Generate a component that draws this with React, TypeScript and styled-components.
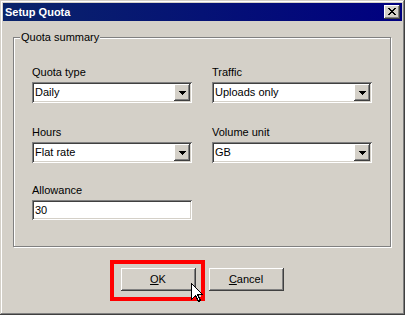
import React from "react";
import styled, { createGlobalStyle } from "styled-components";

const GlobalStyle = createGlobalStyle`
  html, body { margin: 0; padding: 0; background: #d4d0c8; }
  body { font-family: "Liberation Sans", Arial, sans-serif; font-size: 11px; color: #000; }
  * { box-sizing: border-box; }
`;

const Window = styled.div`
  position: relative;
  width: 405px;
  height: 315px;
  padding: 3px;
  background: #d4d0c8;
  box-shadow: inset -1px -1px 0 #404040, inset 1px 1px 0 #d4d0c8,
    inset -2px -2px 0 #808080, inset 2px 2px 0 #ffffff;
  display: flex;
  flex-direction: column;
`;

const TitleBar = styled.div`
  height: 18px;
  display: flex;
  align-items: center;
  justify-content: space-between;
  padding: 0 2px;
  background: linear-gradient(to right, #0a246a, #000080);
  color: #fff;
  font-weight: bold;
  font-size: 11px;
`;

const TitleText = styled.span`
  line-height: 13px;
`;

const Raised = styled.div`
  background: #d4d0c8;
  box-shadow: inset -1px -1px 0 #404040, inset 1px 1px 0 #ffffff,
    inset -2px -2px 0 #808080, inset 2px 2px 0 #d4d0c8;
`;

const CloseButton = styled(Raised)`
  width: 16px;
  height: 14px;
  display: flex;
  align-items: center;
  justify-content: center;
  padding-bottom: 1px;
`;

const Content = styled.div`
  flex: 1;
  display: flex;
  flex-direction: column;
  padding: 16px 11px 0 10px;
`;

const GroupBox = styled.div`
  position: relative;
  width: 378px;
  height: 210px;
  border: 1px solid #808080;
  box-shadow: inset 1px 1px 0 #ffffff, 1px 1px 0 #ffffff;
  padding: 28px 18px 0 18px;
`;

const Legend = styled.span`
  position: absolute;
  top: -7px;
  left: 6px;
  padding: 0 1px;
  background: #d4d0c8;
  line-height: 13px;
`;

const FieldGrid = styled.div`
  display: grid;
  grid-template-columns: 160px 160px;
  column-gap: 20px;
  row-gap: 23px;
`;

const Field = styled.div<{ $shift?: number }>`
  display: flex;
  flex-direction: column;
  margin-top: ${(p) => p.$shift ?? 0}px;
`;

const Label = styled.label`
  line-height: 13px;
  margin-bottom: 3px;
`;

const Sunken = styled.div<{ $h: number }>`
  height: ${(p) => p.$h}px;
  background: #fff;
  box-shadow: inset 1px 1px 0 #808080, inset -1px -1px 0 #ffffff,
    inset 2px 2px 0 #404040, inset -2px -2px 0 #d4d0c8;
  padding: 2px;
  display: flex;
  align-items: stretch;
`;

const ValueText = styled.span`
  flex: 1;
  padding-left: 1px;
  line-height: 17px;
  white-space: nowrap;
`;

const DropButton = styled(Raised)`
  width: 16px;
  height: 17px;
  display: flex;
  align-items: center;
  justify-content: center;
`;

const ButtonRow = styled.div`
  display: flex;
  justify-content: center;
  gap: 13px;
  margin-top: 21px;
`;

const PushButton = styled(Raised)`
  position: relative;
  width: 75px;
  height: 23px;
  display: flex;
  align-items: center;
  justify-content: center;
  line-height: 13px;
`;

const Highlight = styled.div`
  position: absolute;
  left: -11px;
  top: -8px;
  width: 95px;
  height: 41px;
  border: 4px solid #ff0000;
  pointer-events: none;
`;

const Cursor = styled.svg`
  position: absolute;
  left: 70px;
  top: 15px;
`;

const Arrow = () => (
  <svg width="7" height="4" viewBox="0 0 7 4" shapeRendering="crispEdges">
    <path d="M0 0h7v1H0zM1 1h5v1H1zM2 2h3v1H2zM3 3h1v1H3z" fill="#000" />
  </svg>
);

const CloseGlyph = () => (
  <svg width="8" height="7" viewBox="0 0 8 7" shapeRendering="crispEdges">
    <path
      d="M0 0h2v1H0zM6 0h2v1H6zM1 1h2v1H1zM5 1h2v1H5zM2 2h4v1H2zM3 3h2v1H3zM2 4h4v1H2zM1 5h2v1H1zM5 5h2v1H5zM0 6h2v1H0zM6 6h2v1H6z"
      fill="#000"
    />
  </svg>
);

const Combo = ({ value }: { value: string }) => (
  <Sunken $h={21}>
    <ValueText>{value}</ValueText>
    <DropButton>
      <Arrow />
    </DropButton>
  </Sunken>
);

const Edit = ({ value }: { value: string }) => (
  <Sunken $h={20}>
    <ValueText>{value}</ValueText>
  </Sunken>
);

export default function App() {
  return (
    <>
      <GlobalStyle />
      <Window>
        <TitleBar>
          <TitleText>Setup Quota</TitleText>
          <CloseButton>
            <CloseGlyph />
          </CloseButton>
        </TitleBar>
        <Content>
          <GroupBox>
            <Legend>Quota summary</Legend>
            <FieldGrid>
              <Field>
                <Label>Quota type</Label>
                <Combo value="Daily" />
              </Field>
              <Field>
                <Label>Traffic</Label>
                <Combo value="Uploads only" />
              </Field>
              <Field>
                <Label>Hours</Label>
                <Combo value="Flat rate" />
              </Field>
              <Field>
                <Label>Volume unit</Label>
                <Combo value="GB" />
              </Field>
              <Field $shift={-2}>
                <Label>Allowance</Label>
                <Edit value="30" />
              </Field>
            </FieldGrid>
          </GroupBox>
          <ButtonRow>
            <PushButton>
              <span>
                <u>O</u>K
              </span>
              <Highlight />
              <Cursor width="13" height="20" viewBox="0 0 13 20" shapeRendering="crispEdges">
                <path
                  d="M0.5 0.5 L0.5 16.5 L4.5 12.5 L7.5 18.5 L9.5 17.5 L6.5 11.5 L11.5 11.5 Z"
                  fill="#fff"
                  stroke="#000"
                  strokeWidth="1"
                />
              </Cursor>
            </PushButton>
            <PushButton>
              <span>
                <u>C</u>ancel
              </span>
            </PushButton>
          </ButtonRow>
        </Content>
      </Window>
    </>
  );
}
